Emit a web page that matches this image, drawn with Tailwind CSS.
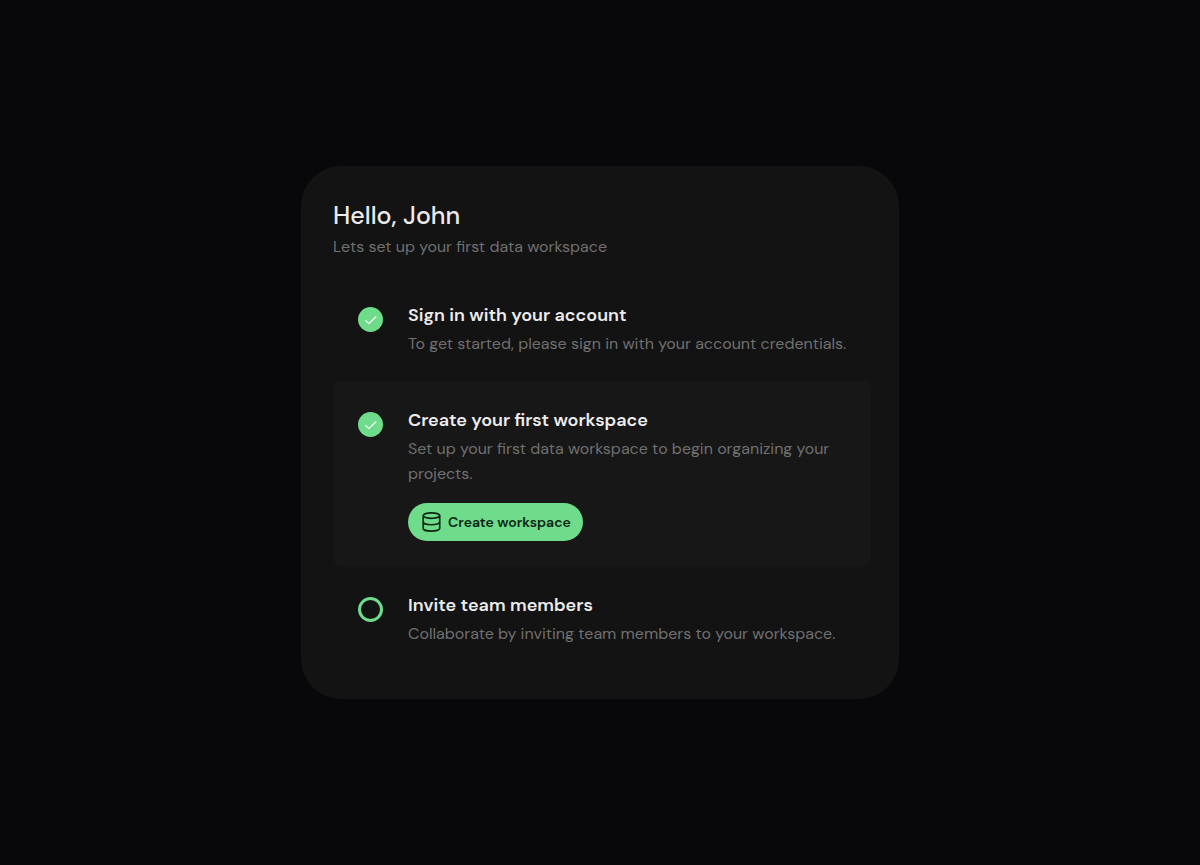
<!DOCTYPE html>
<html lang="en">
<head>
  <meta charset="UTF-8">
  <meta name="viewport" content="width=device-width, initial-scale=1.0">
  <title>Workspace setup</title>
  <script src="https://cdn.jsdelivr.net/npm/@tailwindcss/browser@4"></script>
</head>
<body class="min-h-screen flex items-center justify-center bg-[#08080a] font-['DM_Sans','Inter',sans-serif]">
  <main class="w-full max-w-[598px] rounded-[40px] bg-[#131313] pt-8 pr-7 pb-7 pl-8">
    <header class="mb-[17px]">
      <h1 class="text-[25px] leading-9 font-medium text-[#ececec]">Hello, John</h1>
      <p class="text-base leading-[25px] text-[#707070]">Lets set up your first data workspace</p>
    </header>

    <ol>
      <!-- Sign in -->
      <li class="flex gap-[25px] py-[25px] pr-4 pl-[25px]">
        <span class="mt-1.5 flex size-[25px] shrink-0 items-center justify-center rounded-full bg-[#6edc8a]">
          <svg class="size-4 text-white" fill="none" stroke="currentColor" viewBox="0 0 16 16" aria-hidden="true">
            <path stroke-linecap="round" stroke-linejoin="round" stroke-width="1.2" d="M2.8 8.6l3 3L13 4.8"></path>
          </svg>
        </span>
        <div class="flex-1 min-w-0">
          <h2 class="text-lg leading-7 font-semibold text-[#ececec]">Sign in with your account</h2>
          <p class="mt-0.5 text-base leading-[25px] text-[#707070]">To get started, please sign in with your account credentials.</p>
        </div>
      </li>

      <!-- Create workspace (current) -->
      <li class="flex gap-[25px] rounded-lg bg-[#171717] py-[25px] pr-4 pl-[25px]" aria-current="step">
        <span class="mt-1.5 flex size-[25px] shrink-0 items-center justify-center rounded-full bg-[#6edc8a]">
          <svg class="size-4 text-white" fill="none" stroke="currentColor" viewBox="0 0 16 16" aria-hidden="true">
            <path stroke-linecap="round" stroke-linejoin="round" stroke-width="1.2" d="M2.8 8.6l3 3L13 4.8"></path>
          </svg>
        </span>
        <div class="flex-1 min-w-0">
          <h2 class="text-lg leading-7 font-semibold text-[#ececec]">Create your first workspace</h2>
          <p class="mt-0.5 text-base leading-[25px] text-[#707070]">Set up your first data workspace to begin organizing your projects.</p>
          <button type="button" class="mt-[17px] flex h-[38px] items-center gap-1.5 rounded-full bg-[#6edc8a] px-3 text-sm font-semibold text-[#0d2414] cursor-pointer">
            <svg class="size-[22px]" fill="none" stroke="currentColor" stroke-width="1.8" viewBox="0 0 24 24" aria-hidden="true">
              <ellipse cx="12.5" cy="5" rx="9" ry="3"></ellipse>
              <path d="M3.5 5v14c0 1.7 4 3 9 3s9-1.3 9-3V5"></path>
              <path d="M3.5 12c0 1.7 4 3 9 3s9-1.3 9-3"></path>
            </svg>
            Create workspace
          </button>
        </div>
      </li>

      <!-- Invite team -->
      <li class="flex gap-[25px] py-[25px] pr-4 pl-[25px]">
        <span class="mt-1.5 size-[25px] shrink-0 rounded-full border-3 border-[#6edc8a]"></span>
        <div class="flex-1 min-w-0">
          <h2 class="text-lg leading-7 font-semibold text-[#ececec]">Invite team members</h2>
          <p class="mt-0.5 text-base leading-[25px] text-[#707070]">Collaborate by inviting team members to your workspace.</p>
        </div>
      </li>
    </ol>
  </main>
</body>
</html>
